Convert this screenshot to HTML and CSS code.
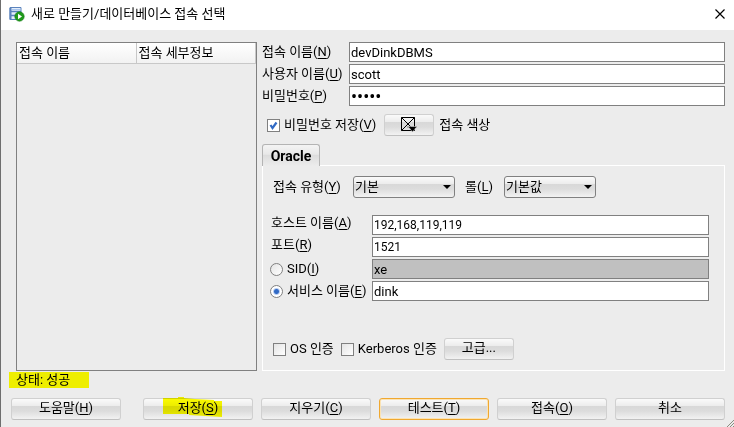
FILE: index.html
```html
<!DOCTYPE html>
<html lang="ko">
<head>
<meta charset="utf-8">
<title>새로 만들기/데이터베이스 접속 선택</title>
<link rel="stylesheet" href="styles.css">
</head>
<body>
<div class="dialog">
  <header class="titlebar">
    <svg class="app-icon" width="16" height="16" viewBox="0 0 16 16" aria-hidden="true">
      <path d="M1 1.500h11v12H1z" fill="#e4eefb" stroke="#5b83bd"/>
      <path d="M1 5.500h11M1 9.500h11" stroke="#5b83bd" stroke-width="1.500"/>
      <path d="M1.500 2v11.500" stroke="#5b83bd" stroke-width="2"/>
      <path d="M3 3.500h8" stroke="#a9c6ee"/>
      <circle cx="10.500" cy="10.500" r="4.700" fill="#1f9a1b" stroke="#137a12" stroke-width=".6"/>
      <path d="M9 7.800v5.400l4-2.700z" fill="#fff"/>
    </svg>
    <h1 class="title">새로 만들기/데이터베이스 접속 선택</h1>
    <button class="close" type="button" aria-label="닫기">
      <svg width="10" height="10" viewBox="0 0 10 10"><path d="M.5.5l9 9M9.500.5l-9 9" stroke="#000" stroke-width="1.200"/></svg>
    </button>
  </header>

  <form class="content">
    <div class="list">
      <table class="connections">
        <thead><tr><th>접속 이름</th><th>접속 세부정보</th></tr></thead>
        <tbody></tbody>
      </table>
    </div>

    <div class="details">
      <div class="fields fields-main">
        <label for="name">접속 이름(<u>N</u>)</label><input class="text" id="name" type="text" value="devDinkDBMS">
        <label for="user">사용자 이름(<u>U</u>)</label><input class="text" id="user" type="text" value="scott">
        <label for="pw">비밀번호(<u>P</u>)</label><input class="text password" id="pw" type="password" value="tiger">
      </div>

      <div class="save-row">
        <label class="option"><input class="check" type="checkbox" checked>비밀번호 저장(<u>V</u>)</label>
        <button class="btn color-btn" id="color" type="button" aria-label="접속 색상">
          <svg width="16" height="15" viewBox="0 0 16 15"><path d="M.5.5h13v13H.5zM.5.5l13 13M13.500.5l-13 13" fill="none" stroke="#000"/><path d="M6 9.500h10v1h-1L11.500 15 8 10.500H6z" stroke="#e4e4e4" stroke-width=".5"/></svg>
        </button>
        <label for="color">접속 색상</label>
      </div>

      <div class="tabs"><button class="tab" type="button">Oracle</button></div>
      <section class="panel">
        <div class="type-row">
          <label class="type-label" for="type">접속 유형(<u>Y</u>)</label>
          <select class="combo combo-type" id="type"><option>기본</option></select>
          <label class="role-label" for="role">롤(<u>L</u>)</label>
          <select class="combo combo-role" id="role"><option>기본값</option></select>
        </div>
        <div class="fields fields-host">
          <label class="address" for="host">호스트 이름(<u>A</u>)</label><input class="text numeric" id="host" type="text" value="192,168,119,119">
          <label class="address" for="port">포트(<u>R</u>)</label><input class="text numeric" id="port" type="text" value="1521">
          <label class="option"><input class="radio" type="radio" name="target">SID(<u>I</u>)</label><input class="text" type="text" value="xe" aria-label="SID" disabled>
          <label class="option"><input class="radio" type="radio" name="target" checked>서비스 이름(<u>E</u>)</label><input class="text" type="text" value="dink" aria-label="서비스 이름">
        </div>
        <div class="auth-row">
          <label class="option"><input class="check" type="checkbox">OS 인증</label>
          <label class="option"><input class="check" type="checkbox">Kerberos 인증</label>
          <button class="btn advanced" type="button">고급...</button>
        </div>
      </section>
    </div>
  </form>

  <p class="status"><mark>상태: 성공</mark></p>

  <footer class="actions">
    <button class="btn help" type="button">도움말(<u>H</u>)</button>
    <button class="btn save" type="button">저장(<u>S</u>)<svg class="marker" width="59" height="20" viewBox="0 0 59 20" aria-hidden="true"><path d="M0 1h15V0h6v1l11 1 19 1v1h8v16l-33-2v-1H0z" fill="#ff0"/></svg></button>
    <button class="btn" type="button">지우기(<u>C</u>)</button>
    <button class="btn focused" type="button">테스트(<u>T</u>)</button>
    <button class="btn" type="button">접속(<u>O</u>)</button>
    <button class="btn" type="button">취소</button>
    <svg class="grip" width="7" height="7" viewBox="0 0 7 7" aria-hidden="true"><path d="M0 7l7-7M3 7l4-4M6 7l1-1" stroke="#8c8c80"/></svg>
  </footer>
</div>
</body>
</html>
```

FILE: styles.css
```css
* { box-sizing: border-box; }

body {
  margin: 0;
  background: #ececec;
  color: #000;
  font: 13px/20px Roboto, "Noto Sans CJK KR", sans-serif;
}

button, input, select { font: inherit; color: inherit; }
u { text-underline-offset: 2px; }

.dialog {
  display: flex;
  flex-direction: column;
  min-height: 100vh;
  border-left: 1px solid #6e6e6e;
}

.titlebar {
  display: flex;
  align-items: center;
  height: 30px;
  padding: 0 9px 2px 8px;
  background: #fff;
}
.title { flex: 1; margin: 0 0 0 6px; font-size: 13px; font-weight: 400; }
.close { display: flex; padding: 0; border: 0; background: none; }

.content {
  display: flex;
  flex: 1;
  gap: 5px;
  padding: 12px 9px 0 15px;
}

.list {
  flex: 0 0 241px;
  border: 1px solid #808080;
}
.connections { width: 100%; border-collapse: separate; border-spacing: 0; table-layout: fixed; }
.connections th {
  height: 21px;
  padding: 0 2px;
  border-right: 1px solid #c8c8c8;
  border-bottom: 1px solid #c8c8c8;
  background: linear-gradient(#fff, #f2f2f2);
  font-weight: 400;
  line-height: 20px;
  text-align: left;
}

.details { display: flex; flex: 1; flex-direction: column; min-width: 0; }

.fields { display: grid; gap: 2px 0; align-items: center; white-space: nowrap; }
.fields-main { grid-template-columns: 87px 1fr; }
.fields-host { grid-template-columns: 101px 1fr; padding: 0 15px 0 8px; margin-top: 17px; }
.address { line-height: 16px; padding-bottom: 4px; }

.text {
  width: 100%;
  min-width: 0;
  height: 20px;
  padding: 0 1px;
  border: 1px solid #808080;
  border-radius: 0;
  background: #fff;
  line-height: 18px;
}
.text:disabled { background: #c0c0c0; }
.numeric { font-size: 12px; }
.password { font-size: 18px; }

.option { display: flex; align-items: center; white-space: pre; }

.check, .radio {
  flex: none;
  appearance: none;
  width: 13px;
  height: 13px;
  margin: 0 4px 0 0;
  border: 1px solid #808080;
  background: linear-gradient(135deg, #e4e4e4, #fff);
}
.check:checked {
  background: url("data:image/svg+xml,%3Csvg xmlns='http://www.w3.org/2000/svg' viewBox='0 0 11 11'%3E%3Cpath d='M2.500 5l2 3L8.500 2.500' fill='none' stroke='%23316ac5' stroke-width='2.200'/%3E%3C/svg%3E") #fff;
}
.radio { margin-left: -1px; border-radius: 50%; }
.radio:checked { background: radial-gradient(circle, #316ac5 0 2px, #b9cdf0 3px, #fff 4px); }

.save-row { display: flex; align-items: center; height: 22px; margin-top: 8px; padding-left: 5px; }
.color-btn { width: 50px; margin: 0 5px 0 8px; }

.btn {
  display: flex;
  align-items: center;
  justify-content: center;
  height: 22px;
  padding: 0 0 2px;
  border: 1px solid #d0d0d0;
  border-bottom-color: #c0c0c0;
  border-radius: 3px;
  background: linear-gradient(#fafafa, #ececec 35%, #d8d8d8 36%, #dcdcdc 60%, #f2f2f2);
}

.tabs { display: flex; height: 22px; margin-top: 8px; }
.tab {
  z-index: 1;
  width: 58px;
  padding: 0;
  border: 1px solid #b4b4b4;
  border-bottom: 0;
  border-radius: 3px 3px 0 0;
  background: linear-gradient(#f4f4f4, #e8e8e8 45%, #dcdcdc 46%, #ececec);
  font-size: 14px;
  font-weight: 700;
}
.panel { flex: 1; margin-top: -1px; border: 1px solid #fff; }

.type-row { display: flex; align-items: center; margin: 10px 0 0 10px; white-space: nowrap; }
.type-label { width: 80px; }
.role-label { width: 39px; }
.combo {
  appearance: none;
  height: 22px;
  padding: 0 1px;
  border: 1px solid #808080;
  border-radius: 3px;
  background:
    url("data:image/svg+xml,%3Csvg xmlns='http://www.w3.org/2000/svg' width='8' height='4'%3E%3Cpath d='M0 0h8L4 4z'/%3E%3C/svg%3E") right 3px center no-repeat,
    linear-gradient(#fafafa, #ececec 35%, #d8d8d8 36%, #dcdcdc 60%, #f2f2f2);
}
.combo-type { width: 102px; margin: 0 10px 0 0; }
.combo-role { width: 92px; }

.auth-row { display: flex; align-items: center; gap: 7px; margin: 37px 0 10px 10px; }
.advanced { width: 70px; }

.status { margin: 1px 0 0 8px; line-height: 16px; }
.status mark { display: inline-block; width: 80px; padding-left: 7px; background: #eeee00; color: inherit; }

.actions {
  position: relative;
  display: flex;
  gap: 8px;
  padding: 10px 9px 7px 10px;
}
.actions .btn { flex: 1; }
.actions .help { margin-right: 14px; }
.actions .save { position: relative; }
.actions .focused { border: 1px solid #f0a830; box-shadow: inset 0 0 0 1px #fbe3b4; }
.marker { position: absolute; left: 19px; top: -2px; mix-blend-mode: multiply; }
.grip { position: absolute; right: 0; bottom: 0; }
```
